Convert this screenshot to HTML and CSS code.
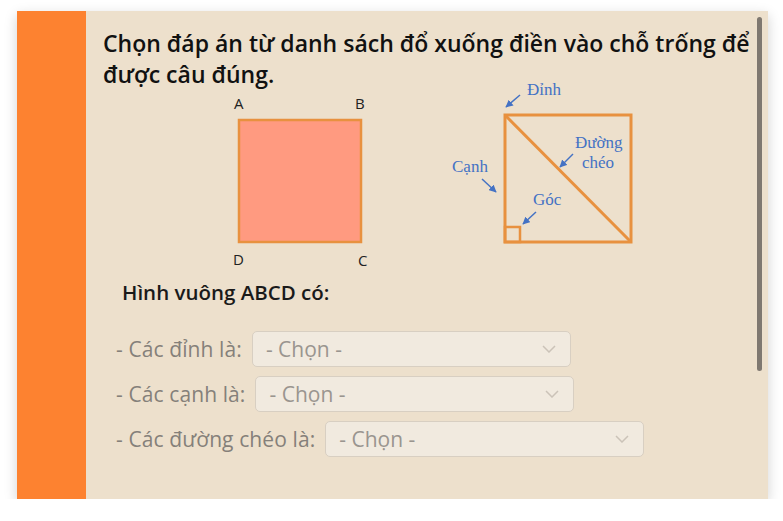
FILE: index.html
```html
<!DOCTYPE html>
<html lang="vi">
<head>
<meta charset="utf-8">
<link rel="stylesheet" href="styles.css">
</head>
<body>
<div class="card">
  <div class="strip"></div>
  <div class="content">
    <p class="title">Chọn đáp án từ danh sách đổ xuống điền vào chỗ trống để được câu đúng.</p>
    <svg class="figure" width="450" height="200" viewBox="0 -10 450 200" xmlns="http://www.w3.org/2000/svg">
      <defs>
        <marker id="ah" viewBox="0 0 10 10" refX="9" refY="5" markerWidth="5" markerHeight="5" orient="auto">
          <path d="M0 0 L10 5 L0 10 z" fill="#4472c4"/>
        </marker>
      </defs>
      <rect x="39" y="38" width="122" height="122" fill="#ff9a80" stroke="#e8913f" stroke-width="2.5"/>
      <g class="lbl">
        <text x="34" y="27">A</text>
        <text x="155" y="27">B</text>
        <text x="33" y="183">D</text>
        <text x="158" y="184">C</text>
      </g>
      <rect x="305" y="33" width="126" height="127" fill="none" stroke="#e8913f" stroke-width="3"/>
      <line x1="305" y1="33" x2="431" y2="160" stroke="#e8913f" stroke-width="3"/>
      <rect x="305" y="145" width="15" height="15" fill="none" stroke="#e8913f" stroke-width="2.5"/>
      <g class="blue">
        <text x="327" y="13">Đỉnh</text>
        <text x="375" y="66">Đường</text>
        <text x="382" y="86">chéo</text>
        <text x="252" y="90">Cạnh</text>
        <text x="333" y="123">Góc</text>
      </g>
      <g stroke="#4472c4" stroke-width="1.5" marker-end="url(#ah)">
        <line x1="320" y1="13" x2="306" y2="25"/>
        <line x1="282" y1="97" x2="296" y2="110"/>
        <line x1="336" y1="130" x2="323" y2="142"/>
        <line x1="373" y1="72" x2="360" y2="85"/>
      </g>
    </svg>
    <p class="heading">Hình vuông ABCD có:</p>
    <div class="rows">
      <div class="row"><span class="label">- Các đỉnh là:</span><div class="select"><span>- Chọn -</span><svg class="chev" width="14" height="8" viewBox="0 0 14 8"><path d="M1 1 L7 7 L13 1" fill="none" stroke="#cbc3b8" stroke-width="1.5"/></svg></div></div>
      <div class="row"><span class="label">- Các cạnh là:</span><div class="select"><span>- Chọn -</span><svg class="chev" width="14" height="8" viewBox="0 0 14 8"><path d="M1 1 L7 7 L13 1" fill="none" stroke="#cbc3b8" stroke-width="1.5"/></svg></div></div>
      <div class="row"><span class="label">- Các đường chéo là:</span><div class="select"><span>- Chọn -</span><svg class="chev" width="14" height="8" viewBox="0 0 14 8"><path d="M1 1 L7 7 L13 1" fill="none" stroke="#cbc3b8" stroke-width="1.5"/></svg></div></div>
    </div>
  </div>
  <div class="scrollbar"></div>
</div>
</body>
</html>
```

FILE: styles.css
```css
html, body {
  margin: 0;
  padding: 0;
  background: #ffffff;
}
body {
  font-family: "Open Sans", "Noto Sans", sans-serif;
}
.card {
  position: relative;
  margin: 11px 0 0 17px;
  width: 751px;
  height: 488px;
  display: flex;
  background: #ede0cc;
  box-shadow: 0 4px 12px rgba(0, 0, 0, 0.18);
}
.strip {
  width: 69px;
  flex: none;
  background: #fd8230;
}
.content {
  flex: 1;
  padding: 0 0 0 17px;
  overflow: hidden;
}
.title {
  margin: 17px 0 0 0;
  font-size: 23px;
  font-weight: 600;
  line-height: 31px;
  color: #111;
}
.figure {
  display: block;
  margin: -18px 0 0 97px;
}
.lbl text {
  font-family: "Open Sans", sans-serif;
  font-size: 15px;
  fill: #222;
}
.blue text {
  font-family: "Liberation Serif", serif;
  font-size: 17px;
  fill: #4472c4;
}
.heading {
  margin: 6px 0 0 19px;
  font-size: 20.5px;
  font-weight: 600;
  line-height: 28px;
  color: #1a1a1a;
}
.rows {
  margin: 25px 0 0 13px;
  display: flex;
  flex-direction: column;
  gap: 9px;
}
.row {
  display: flex;
  align-items: center;
  gap: 10px;
}
.label {
  font-size: 21px;
  color: #85807a;
  letter-spacing: 0.1px;
}
.select {
  box-sizing: border-box;
  width: 319px;
  height: 36px;
  background: #f1eadf;
  border: 1px solid #d8cfc2;
  border-radius: 5px;
  display: flex;
  align-items: center;
  justify-content: space-between;
  padding: 0 14px 0 13px;
  font-size: 21px;
  color: #9a958f;
}
.chev {
  display: block;
}
.scrollbar {
  position: absolute;
  right: 6px;
  top: 6px;
  width: 5px;
  height: 354px;
  border-radius: 3px;
  background: #7f7870;
}
```
